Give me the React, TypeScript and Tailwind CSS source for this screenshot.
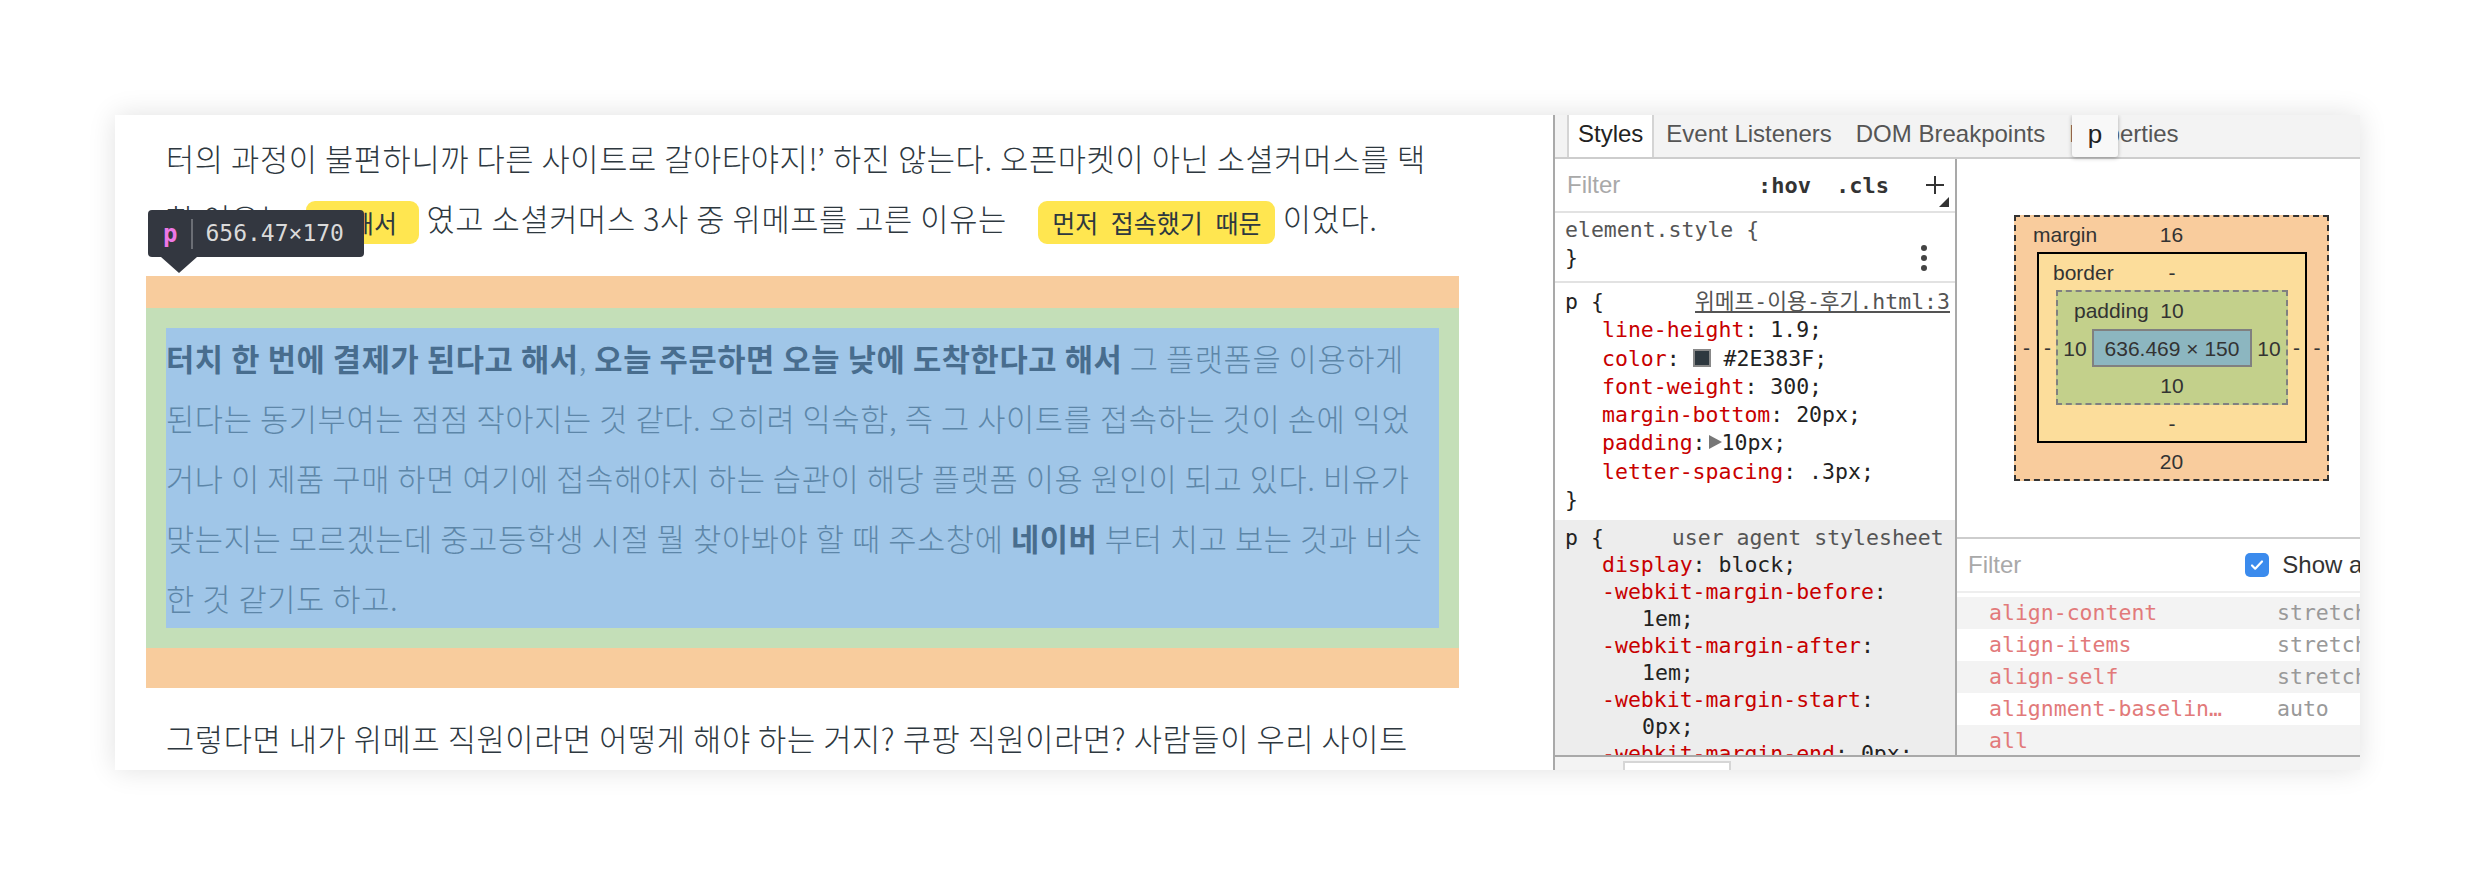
import React from 'react'

const mono = "font-['DejaVu_Sans_Mono','Noto_Sans_CJK_KR',monospace]"
const sans = "font-['Liberation_Sans',Arial,sans-serif]"

function Mark({ children, className = '' }: { children: React.ReactNode; className?: string }) {
  return (
    <span
      className={`inline-block align-middle bg-[#ffe650] rounded-[9px] text-[25px] leading-[43px] font-normal text-[#2E383F] tracking-normal [word-spacing:7px] ${className}`}
    >
      {children}
    </span>
  )
}

function Page() {
  return (
    <div className="relative w-[1438px] shrink-0 h-full overflow-hidden pl-[31px] font-['Noto_Sans_CJK_KR',sans-serif] text-[30.7px] leading-[60px] tracking-[0.6px]">
      <div className="w-[1313px]">
        {/* previous paragraph */}
        <div className="pt-[13px] px-[20px] text-[#2E383F] font-light">
          <div className="whitespace-nowrap">
            터의 과정이 불편하니까 다른 사이트로 갈아타야지!’ 하진 않는다. 오픈마켓이 아닌 소셜커머스를 택
          </div>
          <div className="whitespace-nowrap">
            한 이유는 <Mark className="ml-[10px] px-[22px]">편해서</Mark> 였고 소셜커머스 3사 중 위메프를 고른 이유는{' '}
            <Mark className="ml-[24px] px-[14px]">먼저 접속했기 때문</Mark> 이었다.
          </div>
        </div>

        {/* inspected paragraph: margin / padding / content */}
        <div className="mt-[28px] bg-[#f8cc9d] pt-[32px] pb-[40px]">
          <div className="bg-[#c4dfb8] p-[20px]">
            <div className="bg-[#a0c6e8] h-[300px] text-[#5d86a8] font-light">
              <div className="whitespace-nowrap">
                <b className="font-semibold text-[#486d8e]">터치 한 번에 결제가 된다고 해서</b>,{' '}
                <b className="font-semibold text-[#486d8e]">오늘 주문하면 오늘 낮에 도착한다고 해서</b> 그 플랫폼을 이용하게
              </div>
              <div className="whitespace-nowrap">
                된다는 동기부여는 점점 작아지는 것 같다. 오히려 익숙함, 즉 그 사이트를 접속하는 것이 손에 익었
              </div>
              <div className="whitespace-nowrap">
                거나 이 제품 구매 하면 여기에 접속해야지 하는 습관이 해당 플랫폼 이용 원인이 되고 있다. 비유가
              </div>
              <div className="whitespace-nowrap">
                맞는지는 모르겠는데 중고등학생 시절 뭘 찾아봐야 할 때 주소창에{' '}
                <b className="font-semibold text-[#486d8e]">네이버</b> 부터 치고 보는 것과 비슷
              </div>
              <div className="whitespace-nowrap">한 것 같기도 하고.</div>
            </div>
          </div>
        </div>

        {/* next paragraph */}
        <div className="pt-[20px] px-[20px] text-[#2E383F] font-light">
          <div className="whitespace-nowrap">
            그렇다면 내가 위메프 직원이라면 어떻게 해야 하는 거지? 쿠팡 직원이라면? 사람들이 우리 사이트
          </div>
        </div>
      </div>

      {/* element tooltip */}
      <div className="absolute left-[33px] top-[95px] w-[216px] h-[47px] bg-[#333740] rounded-[4px] flex items-center pl-[15px]">
        <span className={`${mono} text-[24px] font-bold text-[#ee78e6] tracking-normal leading-none`}>p</span>
        <span className="w-[2px] h-[30px] bg-[#6b6e75] ml-[14px]" />
        <span className={`${mono} text-[23px] text-[#dadada] ml-[12px] tracking-normal leading-none`}>656.47×170</span>
      </div>
      <div className="absolute left-[46px] top-[142px] w-0 h-0 border-l-[18px] border-r-[18px] border-t-[16px] border-l-transparent border-r-transparent border-t-[#333740]" />
    </div>
  )
}

function Prop({ name, children }: { name: string; children: React.ReactNode }) {
  return (
    <div className="pl-[37px] whitespace-nowrap">
      <span className="text-[#c80000]">{name}</span>
      <span className="text-[#222]">: {children}</span>
    </div>
  )
}

function StylesPane() {
  return (
    <div className="w-[402px] shrink-0 border-r-2 border-[#a9a9a9] flex flex-col overflow-hidden">
      {/* filter toolbar */}
      <div className="relative h-[54px] shrink-0 border-b-2 border-[#e2e2e2] flex items-center pl-[12px] pr-[10px]">
        <span className={`${sans} text-[24px] text-[#a9a9a9]`}>Filter</span>
        <span className={`${mono} ml-auto text-[22px] font-bold text-[#333]`}>:hov</span>
        <span className={`${mono} ml-[25px] text-[22px] font-bold text-[#333]`}>.cls</span>
        <svg className="ml-[36px]" width="20" height="20" viewBox="0 0 20 20">
          <path d="M10 1v18M1 10h18" stroke="#333" strokeWidth="2" />
        </svg>
        <div className="absolute right-[6px] bottom-[4px] w-0 h-0 [border-bottom:10px_solid_#333] [border-left:10px_solid_transparent]" />
      </div>

      <div className={`${mono} text-[21.5px] leading-[28.3px] text-[#222]`}>
        {/* element.style */}
        <div className="relative h-[70px] border-b-2 border-[#e2e2e2] pt-[3px] pl-[10px]">
          <div className="text-[#555]">element.style {'{'}</div>
          <div>{'}'}</div>
          <div className="absolute right-[28px] top-[32px] flex flex-col gap-[4px]">
            <span className="w-[6px] h-[6px] rounded-full bg-[#444]" />
            <span className="w-[6px] h-[6px] rounded-full bg-[#444]" />
            <span className="w-[6px] h-[6px] rounded-full bg-[#444]" />
          </div>
        </div>

        {/* p rule */}
        <div className="h-[237px] pt-[5px] pl-[10px] pr-[5px]">
          <div className="flex justify-between whitespace-nowrap">
            <span>p {'{'}</span>
            <span className="underline text-[#545454]">위메프-이용-후기.html:3</span>
          </div>
          <Prop name="line-height">1.9;</Prop>
          <Prop name="color">
            <span className="inline-block align-middle w-[18px] h-[18px] bg-[#2E383F] border-2 border-[#888] mb-[4px]" /> #2E383F;
          </Prop>
          <Prop name="font-weight">300;</Prop>
          <Prop name="margin-bottom">20px;</Prop>
          <Prop name="padding">
            <span className="inline-block align-middle w-0 h-0 border-t-[7px] border-b-[7px] border-l-[13px] border-t-transparent border-b-transparent border-l-[#777] mb-[4px] ml-[-10px]" />10px;
          </Prop>
          <Prop name="letter-spacing">.3px;</Prop>
          <div>{'}'}</div>
        </div>

        {/* user agent rule */}
        <div className="bg-[#ededed] pt-[4px] pl-[10px] leading-[27px] h-[240px]">
          <div className="whitespace-nowrap">
            p {'{'}<span className="ml-[68px] text-[#555]">user agent stylesheet</span>
          </div>
          <Prop name="display">block;</Prop>
          <Prop name="-webkit-margin-before">{''}</Prop>
          <div className="pl-[77px]">1em;</div>
          <Prop name="-webkit-margin-after">{''}</Prop>
          <div className="pl-[77px]">1em;</div>
          <Prop name="-webkit-margin-start">{''}</Prop>
          <div className="pl-[77px]">0px;</div>
          <Prop name="-webkit-margin-end">0px;</Prop>
        </div>
      </div>
    </div>
  )
}

function BoxModel() {
  const label = `${sans} text-[21px] text-[#333] leading-none`
  return (
    <div className="w-[315px] h-[266px] border-2 border-dashed border-[#333] bg-[#f9cc9d] flex flex-col">
      <div className="h-[35px] grid grid-cols-[1fr_auto_1fr] items-center">
        <span className={`${label} pl-[17px]`}>margin</span>
        <span className={label}>16</span>
        <span />
      </div>
      <div className="flex">
        <div className={`w-[21px] flex items-center justify-center ${label}`}>-</div>
        {/* border box */}
        <div className="w-[270px] h-[191px] border-2 border-black bg-[#fcdd9b] flex flex-col">
          <div className="h-[36px] grid grid-cols-[1fr_auto_1fr] items-center">
            <span className={`${label} pl-[14px]`}>border</span>
            <span className={label}>-</span>
            <span />
          </div>
          <div className="flex">
            <div className={`w-[17px] flex items-center justify-center ${label}`}>-</div>
            {/* padding box */}
            <div className="w-[232px] h-[115px] border-2 border-dashed border-[#808080] bg-[#c3d08b] flex flex-col">
              <div className="h-[37px] grid grid-cols-[1fr_auto_1fr] items-center">
                <span className={`${label} pl-[16px]`}>padding</span>
                <span className={label}>10</span>
                <span />
              </div>
              <div className="flex">
                <div className={`w-[34px] flex items-center justify-center ${label}`}>10</div>
                <div className={`w-[160px] h-[38px] border-2 border-[#808080] bg-[#8cb6c0] flex items-center justify-center ${label}`}>
                  636.469 × 150
                </div>
                <div className={`w-[34px] flex items-center justify-center ${label}`}>10</div>
              </div>
              <div className={`h-[36px] flex items-center justify-center ${label}`}>10</div>
            </div>
            <div className={`w-[17px] flex items-center justify-center ${label}`}>-</div>
          </div>
          <div className={`h-[36px] flex items-center justify-center ${label}`}>-</div>
        </div>
        <div className={`w-[20px] flex items-center justify-center ${label}`}>-</div>
      </div>
      <div className={`h-[36px] flex items-center justify-center ${label}`}>20</div>
    </div>
  )
}

const computed: [string, string][] = [
  ['align-content', 'stretch'],
  ['align-items', 'stretch'],
  ['align-self', 'stretch'],
  ['alignment-baselin…', 'auto'],
  ['all', ''],
]

function ComputedPane() {
  return (
    <div className="flex-1 flex flex-col overflow-hidden">
      <div className="h-[380px] shrink-0 border-b-2 border-[#cdcdcd] pt-[56px] pl-[57px]">
        <BoxModel />
      </div>
      <div className="h-[54px] shrink-0 border-b-2 border-[#eeeeee] flex items-center pl-[11px] whitespace-nowrap">
        <span className={`${sans} text-[24px] text-[#a9a9a9]`}>Filter</span>
        <span className="ml-[224px] shrink-0 w-[24px] h-[24px] rounded-[5px] bg-[#3b8bed] flex items-center justify-center">
          <svg width="16" height="16" viewBox="0 0 16 16">
            <path d="M3 8.5l3.2 3.2L13 4.5" fill="none" stroke="#fff" strokeWidth="2.2" strokeLinecap="round" strokeLinejoin="round" />
          </svg>
        </span>
        <span className={`${sans} ml-[13px] text-[24px] text-[#333]`}>Show all</span>
      </div>
      <div className={`${mono} text-[21.5px] mt-[4px]`}>
        {computed.map(([n, v], i) => (
          <div key={n} className={`h-[32px] flex items-center whitespace-nowrap ${i % 2 === 0 ? 'bg-[#f3f3f3]' : 'bg-white'}`}>
            <span className="w-[320px] shrink-0 pl-[32px] text-[#e27a7a]">{n}</span>
            <span className="text-[#999]">{v}</span>
          </div>
        ))}
      </div>
    </div>
  )
}

function DevTools() {
  const tab = `${sans} text-[24px] px-[12px] pb-[4px] flex items-center text-[#555] whitespace-nowrap`
  return (
    <div className="flex-1 flex flex-col border-l-2 border-[#a9a9a9] bg-white overflow-hidden">
      {/* tab strip */}
      <div className="relative h-[44px] shrink-0 bg-[#f3f3f3] border-b-2 border-[#cdcdcd] flex pl-[12px]">
        <div className={`${sans} text-[24px] px-[9px] pb-[4px] flex items-center bg-white border-x-2 border-[#d4d4d4] text-[#222]`}>Styles</div>
        <div className={tab}>Event Listeners</div>
        <div className={tab}>DOM Breakpoints</div>
        <div className={tab}>Properties</div>
        <div className={`${sans} absolute left-[517px] top-0 w-[46px] h-[42px] bg-[#f8f8f8] rounded-b-[3px] shadow-[0_1px_4px_rgba(0,0,0,0.3)] flex items-center justify-center pb-[4px] text-[26px] text-[#222]`}>
          p
        </div>
      </div>

      <div className="flex flex-1 min-h-0">
        <StylesPane />
        <ComputedPane />
      </div>

      {/* drawer strip */}
      <div className="h-[15px] shrink-0 border-t-2 border-[#a9a9a9] bg-[#f3f3f3] pl-[68px] pt-[4px]">
        <div className="w-[108px] h-full bg-white border-x-2 border-t-2 border-[#d6d6d6]" />
      </div>
    </div>
  )
}

export default function App() {
  return (
    <div className="w-[2478px] h-[886px] bg-white pt-[115px] pl-[115px]">
      <div className="flex w-[2245px] h-[655px] bg-white shadow-[0_0_26px_rgba(0,0,0,0.12)] overflow-hidden">
        <Page />
        <DevTools />
      </div>
    </div>
  )
}
